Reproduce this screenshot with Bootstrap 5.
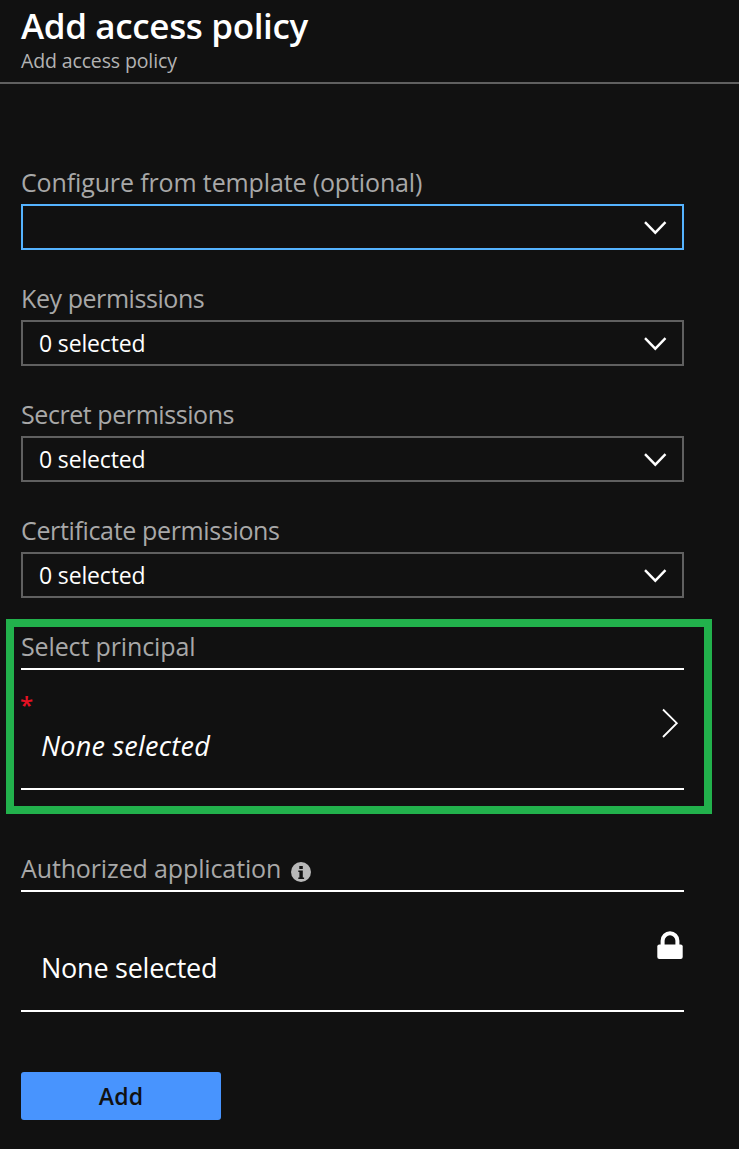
<!DOCTYPE html>
<html lang="en" data-bs-theme="dark">
<head>
<meta charset="utf-8">
<meta name="viewport" content="width=device-width, initial-scale=1">
<title>Add access policy</title>
<link rel="stylesheet" href="https://cdn.jsdelivr.net/npm/bootstrap@5.3.0/dist/css/bootstrap.min.css">
<style>
  body { background: #111; color: #fff; font-family: "Open Sans", "Noto Sans", sans-serif; min-height: 1149px; }
  .blade-header { height: 84px; padding: 6px 21px 0; border-bottom: 2px solid #606060; }
  .blade-title { font-size: 35px; line-height: 39px; font-weight: 600; letter-spacing: -.36px; }
  .blade-subtitle { font-size: 19.5px; line-height: 32px; color: #b3b3b3; letter-spacing: -.13px; }
  .blade-body { padding: 82px 55px 0 21px; }
  .field { height: 116px; }
  .field-label { font-size: 25px; line-height: 33px; height: 38px; color: #a8a8a8; letter-spacing: -.13px; margin: 0; }
  .field-label.snug { letter-spacing: -.43px; }
  .field-label.semi-snug { letter-spacing: -.35px; }
  .picker { height: 46px; border: 2px solid #606060; border-radius: 0; background: transparent; color: #fff; padding: 0 15px 0 16px; font-size: 23px; line-height: 42px; letter-spacing: -.15px; text-align: left; }
  .picker.active { border-color: #55b3ff; }
  .highlight { width: 706px; height: 195px; margin: -11px 0 38px -15px; border: 8px solid #22b14c; padding: 3px 20px 0 7px; }
  .selector { height: 122px; border: solid #fff; border-width: 2px 0; font-size: 27px; line-height: 40px; }
  .selector-value { margin: 56px 0 0 20px; letter-spacing: -.25px; }
  .selector-value.fst-italic { margin-top: 0; letter-spacing: .25px; }
  .star { font-size: 24px; font-weight: 600; line-height: 30px; height: 36px; margin: 20px 0 0 -1px; color: #e81123; }
  .chevron-end { margin: 38px 5px 0 0; }
  .lock-end { margin: 39px 1px 0 0; }
  .info-dot { margin: 10px 0 0 10px; }
  .btn-add, .btn-add:hover { width: 200px; height: 48px; margin-top: 60px; padding: 0 0 1px; border: 0; background: #4894fe; color: #111; font-size: 23px; line-height: 46px; font-weight: 600; letter-spacing: .3px; border-radius: 3px; }
</style>
</head>
<body>
<header class="blade-header">
  <h1 class="blade-title m-0">Add access policy</h1>
  <div class="blade-subtitle">Add access policy</div>
</header>
<main class="blade-body">
  <div class="field">
    <div class="field-label">Configure from template (optional)</div>
    <button type="button" aria-label="Template" class="picker active w-100 d-flex align-items-center justify-content-between">
      <span></span>
      <svg width="24" height="16" viewBox="0 0 24 16" fill="none" stroke="#fff" stroke-width="2.4"><path d="M2 3.2 12.3 13.7 22.5 3.2"/></svg>
    </button>
  </div>
  <div class="field">
    <div class="field-label snug">Key permissions</div>
    <button type="button" class="picker w-100 d-flex align-items-center justify-content-between">
      <span>0 selected</span>
      <svg width="24" height="16" viewBox="0 0 24 16" fill="none" stroke="#fff" stroke-width="2.4"><path d="M2 3.2 12.3 13.7 22.5 3.2"/></svg>
    </button>
  </div>
  <div class="field">
    <div class="field-label snug">Secret permissions</div>
    <button type="button" class="picker w-100 d-flex align-items-center justify-content-between">
      <span>0 selected</span>
      <svg width="24" height="16" viewBox="0 0 24 16" fill="none" stroke="#fff" stroke-width="2.4"><path d="M2 3.2 12.3 13.7 22.5 3.2"/></svg>
    </button>
  </div>
  <div class="field">
    <div class="field-label semi-snug">Certificate permissions</div>
    <button type="button" class="picker w-100 d-flex align-items-center justify-content-between">
      <span>0 selected</span>
      <svg width="24" height="16" viewBox="0 0 24 16" fill="none" stroke="#fff" stroke-width="2.4"><path d="M2 3.2 12.3 13.7 22.5 3.2"/></svg>
    </button>
  </div>
  <section class="highlight">
    <div class="field-label">Select principal</div>
    <div class="selector d-flex justify-content-between align-items-start">
      <div>
        <div class="star">*</div>
        <div class="selector-value fst-italic">None selected</div>
      </div>
      <svg class="chevron-end" width="18" height="30" viewBox="0 0 18 30" fill="none" stroke="#fff" stroke-width="1.8"><path d="M2 1.5 15.8 15.2 2 29"/></svg>
    </div>
  </section>
  <section>
    <div class="field-label d-flex align-items-start">Authorized application
      <svg class="info-dot" width="20" height="20" viewBox="0 0 20 20"><circle cx="10" cy="10" r="10" fill="#b8b8b8"/><path fill="#111" d="M8.3 4h3.5v2.9H8.3zM7.3 8.6h4.5v7h1.3v1.5H7.3v-1.5h1.1v-5.5H7.3z"/></svg>
    </div>
    <div class="selector d-flex justify-content-between align-items-start">
      <div class="selector-value">None selected</div>
      <svg class="lock-end" width="26" height="29" viewBox="0 0 26 29"><path d="M5.6 15V9.7a7.4 7.4 0 0 1 14.8 0V15" fill="none" stroke="#fff" stroke-width="4"/><rect x="0.3" y="13.4" width="25.4" height="14.6" rx="2" fill="#fff"/></svg>
    </div>
  </section>
  <button type="button" class="btn btn-add d-block">Add</button>
</main>
<script src="https://cdn.jsdelivr.net/npm/bootstrap@5.3.0/dist/js/bootstrap.bundle.min.js"></script>
</body>
</html>
